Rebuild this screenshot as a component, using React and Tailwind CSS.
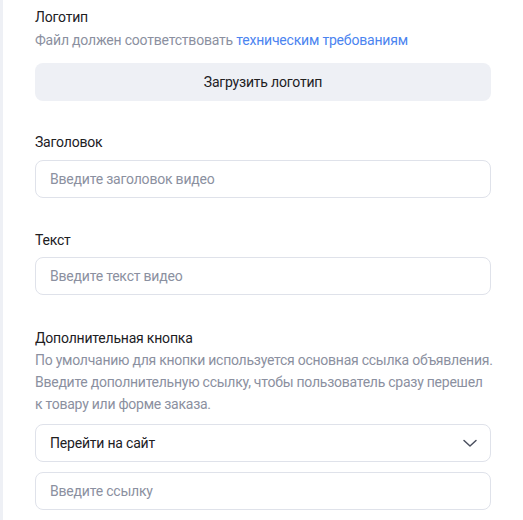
import React from 'react'

const Label = ({ children }) => (
  <div className="text-[14px] leading-[20px] text-[#21201f]">{children}</div>
)

const Field = ({ placeholder }) => (
  <div className="h-[38px] rounded-lg border border-[#dfe2ea] bg-white px-[14px] flex items-center text-[14px] text-[#8b90a0]">
    {placeholder}
  </div>
)

export default function App() {
  return (
    <div className="flex min-h-[520px] bg-white font-['Roboto',sans-serif] tracking-[-0.2px]">
      {/* left strip */}
      <div className="w-[3px] bg-[#eef0f5]" />
      <div className="flex-1 min-w-0 pl-[32px] pr-[32px] pt-[7px]">
        <Label>Логотип</Label>
        <div className="mt-[3px] text-[14px] leading-[20px] text-[#8b90a0]">
          Файл должен соответствовать{' '}
          <a href="#" className="text-[#4b84f0]">техническим требованиям</a>
        </div>
        <button className="mt-[13px] h-[38px] w-full rounded-lg bg-[#eef0f5] text-[14px] text-[#21201f]">
          Загрузить логотип
        </button>

        <div className="mt-[31px]">
          <Label>Заголовок</Label>
        </div>
        <div className="mt-[8px]">
          <Field placeholder="Введите заголовок видео" />
        </div>

        <div className="mt-[32px]">
          <Label>Текст</Label>
        </div>
        <div className="mt-[7px]">
          <Field placeholder="Введите текст видео" />
        </div>

        <div className="mt-[33px]">
          <Label>Дополнительная кнопка</Label>
        </div>
        <div className="mt-[1px] text-[14px] leading-[22px] text-[#8b90a0] whitespace-nowrap tracking-[-0.25px]">
          По умолчанию для кнопки используется основная ссылка объявления.<br />
          Введите дополнительную ссылку, чтобы пользователь сразу перешел<br />
          к товару или форме заказа.
        </div>
        <div className="mt-[9px] h-[38px] rounded-lg border border-[#dfe2ea] bg-white pl-[14px] pr-[11px] flex items-center justify-between text-[14px] text-[#21201f]">
          <span>Перейти на сайт</span>
          <svg width="18" height="18" viewBox="0 0 18 18" fill="none">
            <path d="M3 6.5L9 12l6-5.5" stroke="#4a4f5e" strokeWidth="1.5" strokeLinecap="round" strokeLinejoin="round" />
          </svg>
        </div>
        <div className="mt-[10px]">
          <Field placeholder="Введите ссылку" />
        </div>
      </div>
    </div>
  )
}
